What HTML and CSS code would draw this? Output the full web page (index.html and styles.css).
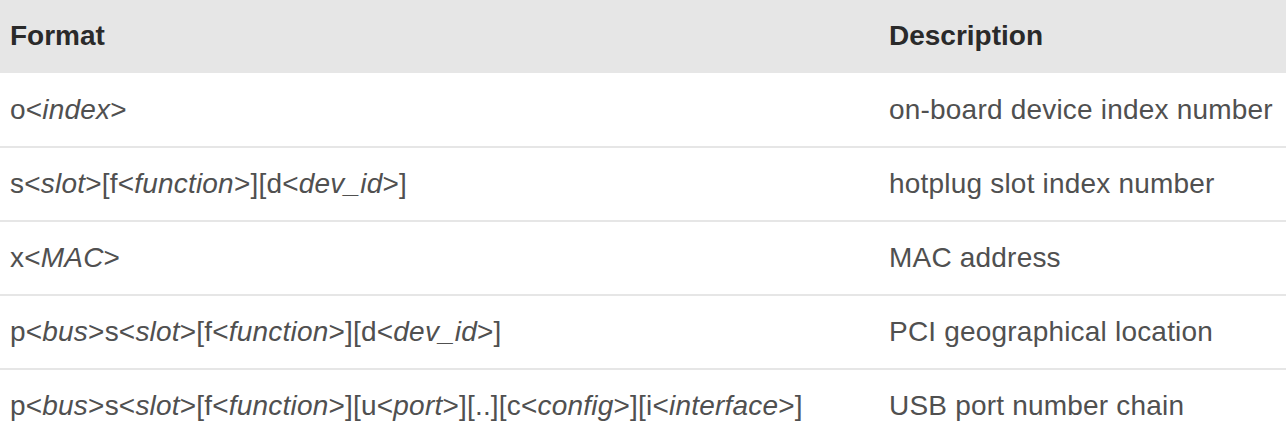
FILE: index.html
```html
<!DOCTYPE html>
<html>
<head>
<meta charset="utf-8">
<link rel="stylesheet" href="styles.css">
</head>
<body>
<table class="fmt-table">
  <colgroup>
    <col class="col-format">
    <col class="col-desc">
  </colgroup>
  <thead>
    <tr><th>Format</th><th>Description</th></tr>
  </thead>
  <tbody>
    <tr><td>o&lt;<i>index</i>&gt;</td><td>on-board device index number</td></tr>
    <tr><td>s&lt;<i>slot</i>&gt;[f&lt;<i>function</i>&gt;][d&lt;<i>dev_id</i>&gt;]</td><td>hotplug slot index number</td></tr>
    <tr><td>x&lt;<i>MAC</i>&gt;</td><td>MAC address</td></tr>
    <tr><td>p&lt;<i>bus</i>&gt;s&lt;<i>slot</i>&gt;[f&lt;<i>function</i>&gt;][d&lt;<i>dev_id</i>&gt;]</td><td>PCI geographical location</td></tr>
    <tr><td>p&lt;<i>bus</i>&gt;s&lt;<i>slot</i>&gt;[f&lt;<i>function</i>&gt;][u&lt;<i>port</i>&gt;][..][c&lt;<i>config</i>&gt;][i&lt;<i>interface</i>&gt;]</td><td>USB port number chain</td></tr>
  </tbody>
</table>
</body>
</html>
```
FILE: styles.css
```css
html, body {
  margin: 0;
  padding: 0;
  background: #ffffff;
}
body {
  font-family: "Liberation Sans", Arial, sans-serif;
  font-size: 28px;
  color: #505050;
  overflow: hidden;
}
.fmt-table {
  width: 1286px;
  table-layout: fixed;
  border-collapse: collapse;
  border-spacing: 0;
}
.col-format { width: 879px; }
.col-desc { width: 407px; }
.fmt-table th,
.fmt-table td {
  text-align: left;
  padding: 16px 10px;
  line-height: 40px;
  white-space: nowrap;
  vertical-align: middle;
}
.fmt-table th {
  background: #e6e6e6;
  color: #2a2a2a;
  font-weight: bold;
  border: none;
}
.fmt-table td {
  border-top: 2px solid #e6e6e6;
  letter-spacing: 0.2px;
}
.fmt-table tbody tr:first-child td {
  border-top: 2px solid transparent;
}
.fmt-table i {
  font-style: italic;
}
```
